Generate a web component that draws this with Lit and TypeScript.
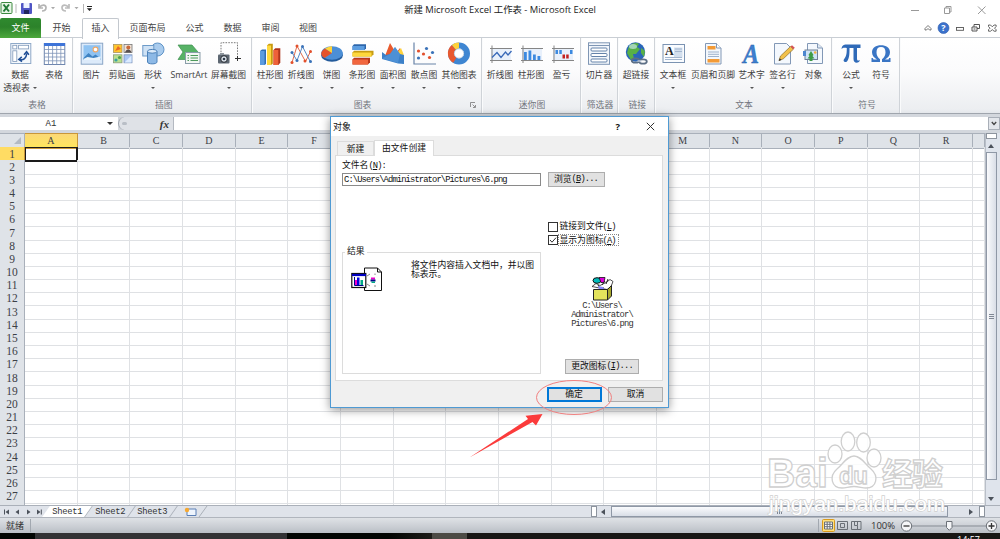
import { LitElement, html, svg, css } from 'lit';
import { customElement, property } from 'lit/decorators.js';
import { classMap } from 'lit/directives/class-map.js';

const ICONS: Record<string, any> = {
  pivot: svg`
    <rect x="2.8" y="1.5" width="20" height="20" fill="#f4f8fc" stroke="#8fa9c8"/>
    <rect x="4.8" y="3.3" width="4" height="3.6" fill="#fff" stroke="#7e97b8" stroke-width=".8"/>
    <rect x="10.6" y="3.3" width="10" height="3.6" fill="#fff" stroke="#7e97b8" stroke-width=".8"/>
    <rect x="4.8" y="8.8" width="4" height="10.6" fill="#fff" stroke="#7e97b8" stroke-width=".8"/>
    <path d="M11.500 17.500c4 1 7-1.500 7.200-6M13.800 14.900l-3 2.500 3.200 2.200M16 12.800l2.600-3 2.300 3" fill="none" stroke="#1f4e96" stroke-width="1.500"/>`,
  table: svg`
    <rect x="2.300" y="1.500" width="20.500" height="21" fill="#fff" stroke="#6f86ae"/>
    <rect x="2" y="1" width="21" height="3" fill="#3e74d8"/>
    <path d="M2 7.500h21M2 11.300h21M2 15h21M2 18.800h21M6.500 4v18.500M10.600 4v18.500M14.700 4v18.500M18.800 4v18.500" stroke="#7d93b8" stroke-width=".8"/>`,
  picture: svg`
    <rect x="1.200" y="1.200" width="21.500" height="21" fill="#dceafa" stroke="#8aa6c6"/>
    <rect x="3.500" y="3.200" width="17" height="14.800" fill="#8fc3f2"/>
    <circle cx="15.500" cy="7.500" r="2.400" fill="#fff" stroke="#f0a868" stroke-width="1.200"/>
    <path d="M3.500 16l5-5 4 3.500 3-2 5 4v1.500h-17z" fill="#3f83c2"/>
    <path d="M3.500 17l4-2 6 1 7-1.500v3.500h-17z" fill="#e8f3fc"/>`,
  clipart: svg`
    <rect x="3.500" y="2.500" width="8.500" height="8" fill="#ffc52e" stroke="#a99361" stroke-width=".8"/>
    <path d="M5 9l3-5 3 3z" fill="#ea6a25"/>
    <rect x="14" y="2.500" width="8" height="8" fill="#efe2d6" stroke="#777" stroke-width=".8"/>
    <circle cx="18.300" cy="5.500" r="2" fill="#c8683a"/><path d="M15 10.500c1-4 5.500-4 6.500 0z" fill="#574f4f"/>
    <rect x="3.500" y="12.800" width="8.500" height="8" fill="#b9e08e" stroke="#8a9c7b" stroke-width=".8"/>
    <circle cx="6" cy="18" r="1.600" fill="#38a1a1"/><circle cx="9.500" cy="15.500" r="1.600" fill="#50a04d"/>
    <rect x="14" y="12.800" width="8" height="8" fill="#a9c6f5" stroke="#7d93b8" stroke-width=".8"/>
    <path d="M14.500 20.500l7-7v7z" fill="#dcebff"/>`,
  shapes: svg`
    <circle cx="16.500" cy="7.500" r="6.500" fill="#a9cbed" stroke="#5e93c7"/>
    <rect x="1.800" y="3.500" width="11" height="10.500" fill="#cfe2f5" stroke="#6d9bc9"/>
    <path d="M6.500 9.500v10.500c0 2.500 9.500 2.500 9.500 0v-10.500z" fill="#8db9e6" stroke="#4d82ba"/>
    <ellipse cx="11.200" cy="9.300" rx="4.700" ry="1.900" fill="#dcebfa" stroke="#4d82ba"/>`,
  smartart: svg`
    <path d="M1 3h14l6 7-6 7.500h-14l5-7.500z" fill="#57b266" stroke="#3f9150" stroke-width=".7"/>
    <rect x="8.500" y="10.500" width="14.500" height="11" fill="#f3f7f3" stroke="#8b9eaa"/>
    <path d="M13.500 13.500h7.500M13.500 16h7.500M13.500 18.500h7.500M10.500 13.500h1.500M10.500 16h1.500M10.500 18.500h1.500" stroke="#4d9a5b" stroke-width="1"/>`,
  screenshot: svg`
    <path d="M4 13v-12.300h16.500v14" fill="none" stroke="#7a7a7a" stroke-dasharray="1.600 1.200"/>
    <path d="M18 16.500h6M20.500 14v5" stroke="#333"/>
    <rect x="1" y="12.500" width="11.500" height="9" rx="1" fill="#5d6772"/>
    <rect x="3" y="11" width="4" height="2" fill="#8c949c"/>
    <circle cx="7" cy="17" r="3.300" fill="#dfe6ee" stroke="#22272d"/><circle cx="7" cy="17" r="1.300" fill="#2e3a48"/>`,
  column: svg`
    <path d="M2 9l2-1.500h4v14.500l-1.500 1h-4.500z" fill="#2f6db5"/><path d="M2 9h4.500v14h-4.500z" fill="#5b9be0"/>
    <path d="M9 3.500l1.800-1.800h4v20l-1.800 1.300h-4z" fill="#c79a10"/><path d="M9 3.500h4v19.500h-4z" fill="#ffd93e"/>
    <path d="M15.500 8l1.800-1.800h5v14.500l-2 2.300h-4.800z" fill="#b0331a"/><path d="M15.500 8h4.800v15h-4.800z" fill="#ee6139"/>`,
  line: svg`
    <path d="M3 20.500l5-16.500 8.500 15.500 5-10" fill="none" stroke="#e06a4c" stroke-width="1"/>
    <path d="M3 10.500l5 8 5.500-14 8 15.500" fill="none" stroke="#5587c5" stroke-width="1"/>
    <g fill="#e2502c"><circle cx="3" cy="20.500" r="1.500"/><circle cx="8" cy="4" r="1.500"/><circle cx="16" cy="19" r="1.500"/><circle cx="21.500" cy="9.500" r="1.500"/></g>
    <g fill="#3a72b8"><circle cx="3" cy="10.500" r="1.500"/><circle cx="8" cy="18.500" r="1.500"/><circle cx="13.500" cy="4.500" r="1.500"/><circle cx="21.500" cy="19.500" r="1.500"/></g>`,
  pie: svg`
    <ellipse cx="12" cy="13" rx="11" ry="6.800" fill="#245b9b"/>
    <ellipse cx="12" cy="11" rx="11" ry="6.800" fill="#4c8fd6"/>
    <path d="M12 11l-7.500 5c-4.500-2.500-4.500-6.500.5-9.500z" fill="#e4532c"/>
    <path d="M12 11l-7-4.500c2-1.300 4.500-2 7-2.300z" fill="#ffd33a"/>`,
  bar: svg`
    <path d="M2.500 4l1.500-1.800h12v4l-1.500 1.800h-12z" fill="#2d66ab"/><path d="M2.500 4h12v4h-12z" fill="#5c9de0"/>
    <path d="M2.500 10.500l1.500-1.800h19.500v3.500l-2 2.300h-19z" fill="#c79c12"/><path d="M2.500 10.500h19v4h-19z" fill="#ffd83d"/>
    <path d="M2.500 17.500l1.500-1.800h16v4.500l-2 2.300h-15.500z" fill="#b8391d"/><path d="M2.500 17.500h15.500v5h-15.500z" fill="#f1663e"/>`,
  area: svg`
    <path d="M4 14l5-13 6 10 4-5 3.500 12-10 2z" fill="#e85a2e"/>
    <path d="M16 11l4-5 2.500 6v6z" fill="#ffd23c"/>
    <path d="M1 10l4 3 4-1 5-7 5 7 4 1v9l-6-.5-16-4.500z" fill="#3c80c8"/>
    <path d="M14 5l5 7-2 9-16-4.500 8-4.500z" fill="#5b9ce0" opacity=".55"/>`,
  scatter: svg`
    <path d="M2 .5v21.500h22" fill="none" stroke="#6883a8" stroke-width="1.200"/>
    <g fill="#e2502c"><circle cx="6.500" cy="9" r="1.600"/><circle cx="11.500" cy="12" r="1.600"/><circle cx="17.500" cy="15.500" r="1.600"/></g>
    <g fill="#3a72b8"><circle cx="14.500" cy="6.500" r="1.600"/><circle cx="20.500" cy="10.500" r="1.600"/><circle cx="6.500" cy="16" r="1.600"/></g>`,
  donut: svg`
    <circle cx="12" cy="11.500" r="8" fill="none" stroke="#3f86d2" stroke-width="6"/>
    <path d="M7.800 18.300a8 8 0 0 1-1-13" fill="none" stroke="#e9582f" stroke-width="6"/>
    <path d="M6.800 5.300a8 8 0 0 1 5.200-1.800" fill="none" stroke="#ffd23a" stroke-width="6"/>
    <circle cx="12" cy="11.500" r="4.700" fill="#fff" stroke="#9bb6d2" stroke-width=".6"/>`,
  sparkline: svg`
    <rect x="3" y="7" width="20" height="11" fill="#e8f0fb"/><path d="M2 6.500h22M2 18.500h22M4 3.500v17.500" stroke="#858585"/>
    <path d="M4 15.500l5-5 4 5 4.500-5.500 2.500 3 3.500-4" fill="none" stroke="#3768b8" stroke-width="1.300"/>`,
  sparkcol: svg`
    <rect x="3" y="7" width="20" height="11" fill="#e8f0fb"/><path d="M2 6.500h22M2 18.500h22M4 3.500v17.500" stroke="#858585"/>
    <path d="M5 10h2.800v8h-2.800zM9.500 8.500h2.800v9.500h-2.800zM14 12.500h2.800v5.500h-2.800zM18.500 14h2.800v4h-2.800z" fill="#3c8ae0"/>`,
  winloss: svg`
    <rect x="3" y="7" width="20" height="11" fill="#e8f0fb"/><path d="M2 6.500h22M2 18.500h22M4 3.500v17.500" stroke="#858585"/>
    <path d="M5.500 8h2.500v4h-2.500zM9.300 8h2.500v4h-2.500zM20 8h2.500v4h-2.500z" fill="#3c8ae0"/>
    <path d="M12.500 12.500h2.500v4h-2.500zM16.200 12.500h2.500v4h-2.500z" fill="#c3201f"/>`,
  slicer: svg`
    <rect x="1.500" y=".8" width="21" height="21.500" fill="#f2f6fb" stroke="#7f96b4"/>
    <path d="M2 3.500h20" stroke="#7f96b4"/>
    <g fill="#fff" stroke="#6583aa"><rect x="4" y="6" width="16" height="3" rx="1"/><rect x="4" y="11.500" width="16" height="3" rx="1"/><rect x="4" y="17" width="16" height="3" rx="1"/></g>`,
  hyperlink: svg`
    <circle cx="11.500" cy="10" r="9.700" fill="#2a66b9"/>
    <path d="M5 4c3-3 8-4 10-2l-2 3 3 2-4 5-3 0 1 5-3 1-4-7z" fill="#58b046"/>
    <path d="M17 6l4 3-1 6-3-4z" fill="#58b046"/><ellipse cx="9" cy="4.500" rx="4" ry="2.500" fill="#d6efff" opacity=".6"/>
    <g fill="none" stroke="#5c6f86" stroke-width="1.800"><ellipse cx="11.500" cy="18.500" rx="3.800" ry="2.200"/><ellipse cx="19" cy="19.500" rx="3.800" ry="2.200"/></g>
    <path d="M13.500 19h4" stroke="#c7d3e2" stroke-width="1.300"/>`,
  textbox: svg`
    <rect x="2" y="2.500" width="21.500" height="18" fill="#fafcff" stroke="#7b93b2"/>
    <rect x="13" y="5.500" width="8.500" height="10" fill="#d3dfee"/><path d="M14 7h7M14 9.500h7M4 15.500h17M4 17.500h17" stroke="#a4b7d0"/>
    <text x="4" y="13" font-family="Liberation Serif, serif" font-size="12" font-weight="bold" fill="#222">A</text>`,
  header: svg`
    <path d="M4.500 1.500h11l4.500 4.500v16h-15.500z" fill="#f3f7fc" stroke="#8298b6"/><path d="M15.500 1.500v4.500h4.500" fill="#fff" stroke="#8298b6"/>
    <rect x="6.500" y="4" width="8" height="3.500" fill="#f39a35"/><rect x="6.500" y="17" width="12" height="3.500" fill="#f39a35"/>
    <path d="M7 10h11M7 12.300h11M7 14.500h11" stroke="#9fb2cb"/>`,
  wordart: svg`
    <text x="3" y="21" font-family="Liberation Serif, serif" font-size="28" font-weight="bold" font-style="italic" fill="#3d7fd0" stroke="#2159a3" stroke-width=".4" textLength="16" lengthAdjust="spacingAndGlyphs">A</text>`,
  signature: svg`
    <path d="M3.500 1.500h12l4 4v16.500h-16z" fill="#f4f8fd" stroke="#8298b6"/>
    <path d="M8 18.500l1.500-4.500 10-9.500 2.800 2.800-10 9.500z" fill="#f2c14b" stroke="#8d6c25" stroke-width=".7"/>
    <path d="M19.500 4.500l1.500-1.300 2.800 2.600-1.500 1.500z" fill="#d65454"/><path d="M7.700 19l1-2.700 1.800 1.700z" fill="#333"/>`,
  object: svg`
    <path d="M5.500 1.500h10l5 4.500v15.500h-15z" fill="#f4f8fd" stroke="#8298b6"/><path d="M15.500 1.500v4.500h5" fill="#dfe8f3" stroke="#8298b6"/>
    <rect x="3" y="8" width="12.500" height="9.500" fill="#cfe3f6" stroke="#6f8096"/><rect x="1" y="9" width="3" height="5" fill="#4c86cf"/>
    <path d="M7.500 19v-2.500h-2l2-2.500-1-1 2.500-4 2.500 4-1 1 2 2.500h-2v2.500z" fill="#3d9b46"/><circle cx="13.200" cy="10.500" r="1.300" fill="#f2ae3b"/>`,
  pi: svg`
    <path d="M2.500 7c.5-3.500 2-4.500 5-4.500h14v3.500h-3.500v10.500c0 2.500 1.500 2.500 3 1.500-.3 3-6.500 4.500-6.500-1v-11h-4c0 6 0 10-2.500 13.500-2.500 1.500-4.500-.5-2.800-2.500 2-2.500 2.600-5 2.600-11-3-.4-4-.2-5.300 1z" fill="#2f6ab8"/>`,
  omega: svg`
    <path d="M2.500 20v-4h1.300l.7 1.500h3.500c-3-2-5-4-5-7.300 0-4.500 4-7 9-7s9 2.500 9 7c0 3.300-2 5.300-5 7.300h3.500l.7-1.500h1.300v4h-8.500v-2.800c2.500-2 3.500-4.200 3.500-7 0-3.500-1.500-5.300-4.500-5.300s-4.500 1.800-4.500 5.300c0 2.800 1 5 3.500 7v2.800z" fill="#3a75c4"/>`,
};

const GROUPS = [
  { name: '表格', width: 73, pad: 2, items: [['pivot', '数据', 36, '透视表'], ['table', '表格', 32]] },
  { name: '插图', width: 179, pad: 3.5, items: [['picture', '图片', 30], ['clipart', '剪贴画', 31], ['shapes', '形状', 31, ' '], ['smartart', 'SmartArt', 41], ['screenshot', '屏幕截图', 38, ' ']] },
  { name: '图表', width: 229.5, pad: 2.5, launcher: true, items: [['column', '柱形图', 31, ' '], ['line', '折线图', 31, ' '], ['pie', '饼图', 30, ' '], ['bar', '条形图', 31, ' '], ['area', '面积图', 31, ' '], ['scatter', '散点图', 31, ' '], ['donut', '其他图表', 39, ' ']] },
  { name: '迷你图', width: 99, pad: 3, items: [['sparkline', '折线图', 31], ['sparkcol', '柱形图', 31], ['winloss', '盈亏', 30]] },
  { name: '筛选器', width: 37, pad: 3, items: [['slicer', '切片器', 31]] },
  { name: '链接', width: 37.5, pad: 3, items: [['hyperlink', '超链接', 31]] },
  { name: '文本', width: 177, pad: 2, items: [['textbox', '文本框', 32, ' '], ['header', '页眉和页脚', 48], ['wordart', '艺术字', 29, ' '], ['signature', '签名行', 33, ' '], ['object', '对象', 29]] },
  { name: '符号', width: 68, pad: 3, items: [['pi', '公式', 32, ' '], ['omega', '符号', 28]] },
] as any[];

@customElement('ribbon-bar')
class RibbonBar extends LitElement {
  static styles = css`
    :host {
      display: flex;
      height: 75px;
      border-top: 1px solid #c9ced4;
      border-bottom: 1px solid #9fa5ad;
      background: linear-gradient(#fff, #fbfbfc 45%, #eceef1 95%, #e4e7eb);
      color: #404040;
      font-size: 8.8px;
    }
    .group {
      box-sizing: border-box;
      display: flex;
      flex-direction: column;
      border-right: 1px solid #cfd3d8;
      box-shadow: 1px 0 #fafbfc;
    }
    .items {
      display: flex;
      height: 61px;
    }
    .item {
      display: flex;
      flex-direction: column;
      align-items: center;
      padding-top: 4px;
      white-space: nowrap;
    }
    .item svg.icon {
      width: 24px;
      height: 24px;
      flex: none;
      overflow: visible;
    }
    .item span {
      line-height: 13px;
      height: 13px;
      margin-top: 2.500px;
    }
    .item .second {
      display: flex;
      align-items: center;
      margin-top: 0;
      gap: 3px;
    }
    .item .second i {
      border: 2px solid transparent;
      border-top-color: #555;
      border-bottom: 0;
    }
    .caption {
      display: flex;
      justify-content: center;
      line-height: 12px;
      color: #72767e;
    }
    .launcher {
      width: 6px;
      height: 6px;
      margin: 3px 4px 0 auto;
    }
    .caption.has-launcher span {
      margin-left: auto;
      padding-left: 0;
    }
  `;

  render() {
    return GROUPS.map(g => html`
      <div class="group" style="width:${g.width}px;padding-left:${g.pad}px">
        <div class="items">
          ${g.items.map(([icon, label, width, second]: any) => html`
            <div class="item" style="width:${width}px">
              <svg class="icon" viewBox="0 0 24 24">${ICONS[icon]}</svg>
              <span>${label}</span>
              ${second ? html`<span class="second">${second.trim()}<i></i></span>` : ''}
            </div>
          `)}
        </div>
        <div class=${classMap({ caption: true, 'has-launcher': !!g.launcher })}>
          <span>${g.name}</span>
          ${g.launcher ? html`<svg class="launcher" viewBox="0 0 6 6"><path d="M.5 5v-4.500h4.500M2.500 2.500l2.500 2.500M5.500 3v2.500h-2.500" fill="none" stroke="#777" stroke-width=".8"/></svg>` : ''}
        </div>
      </div>
    `);
  }
}

@customElement('sheet-grid')
class SheetGrid extends LitElement {
  @property({ type: Number }) rows = 28;

  static styles = css`
    :host {
      display: flex;
      height: 372px;
      overflow: hidden;
      background: #fff;
      font-family: 'Liberation Serif', serif;
      color: #3c4046;
    }
    .sheet {
      flex: 1;
      min-width: 0;
      overflow: hidden;
    }
    .line {
      display: grid;
      grid-template-columns: 25px repeat(18, 52.67px) 1fr;
      height: 13.18px;
      line-height: 14px;
    }
    .line div {
      box-sizing: border-box;
      border-right: 1px solid #dfe1e4;
      border-bottom: 1px solid #dfe1e4;
    }
    .line.head {
      height: 13.6px;
    }
    .line.head div {
      background: #dfe3e8;
      border-color: #a9b0ba;
      border-top: 1px solid #a9b0ba;
      text-align: center;
      font-size: 10px;
      line-height: 14px;
    }
    .line.head div.on {
      background: linear-gradient(#fbd876, #ffe65c);
      border-color: #c8963a;
    }
    .line .num {
      background: #dfe3e8;
      border-color: #a9b0ba;
      text-align: center;
      font-size: 11.5px;
    }
    .line .num.on {
      background: #ffdc63;
      border-color: #c8963a;
    }
    .line .corner svg {
      display: block;
      margin: 3px 3px 0 auto;
    }
    .line .active {
      border: 1.500px solid #1a1a1a;
      border-left-width: 1px;
      border-right-width: 2px;
      border-bottom-width: 2px;
    }
    .scroll {
      width: 11px;
      padding: 0 3.500px 0 0;
      border-left: 1px solid #b9bfc8;
      background: #dfe4ec;
      display: flex;
      flex-direction: column;
      align-items: center;
    }
    .split {
      width: 9px;
      height: 4px;
      border: 1px solid #8d949e;
      background: #fff;
    }
    .up, .down {
      border: 3px solid transparent;
    }
    .up {
      border-top: 0;
      border-bottom: 4px solid #4c525b;
      margin: 5px 0 4px;
    }
    .down {
      border-bottom: 0;
      border-top: 4px solid #4c525b;
      margin-top: 17px;
    }
    .thumb {
      box-sizing: border-box;
      width: 11px;
      height: 328px;
      border: 1px solid #8f98a6;
      background: linear-gradient(90deg, #fafbfd, #d9dee7);
      display: flex;
      align-items: center;
      justify-content: center;
    }
    .grip {
      width: 5px;
      height: 5px;
      background: repeating-linear-gradient(#7f8794 0 1px, transparent 1px 2px);
    }
  `;

  render() {
    const cols = [...'ABCDEFGHIJKLMNOPQR'];
    return html`
      <div class="sheet">
        <div class="line head">
          <div class="corner"><svg width="7" height="7"><path d="M7 0v7h-7z" fill="#b3bac4"/></svg></div>
          ${cols.map((c, i) => html`<div class=${i === 0 ? 'on' : ''}>${c}</div>`)}
          <div></div>
        </div>
        ${Array.from({ length: this.rows }, (_, r) => html`
          <div class="line">
            <div class=${classMap({ num: true, on: r === 0 })}>${r < 27 ? r + 1 : ''}</div>
            ${cols.map((_c, i) => html`<div class=${r === 0 && i === 0 ? 'active' : ''}></div>`)}
            <div></div>
          </div>
        `)}
      </div>
      <div class="scroll">
        <div class="split"></div>
        <div class="up"></div>
        <div class="thumb"><div class="grip"></div></div>
        <div class="down"></div>
      </div>
    `;
  }
}

@customElement('object-dialog')
class ObjectDialog extends LitElement {
  static styles = css`
    :host {
      box-sizing: border-box;
      display: block;
      width: 339px;
      height: 292px;
      border: 1px solid #4f9ad3;
      background: #f0f0f0;
      box-shadow: 0 2px 9px rgba(0, 0, 0, .42);
      color: #111;
      font-size: 8.8px;
      line-height: 9px;
    }
    .mono {
      font-family: 'Liberation Mono', monospace;
      letter-spacing: -.88px;
    }
    .title {
      display: flex;
      align-items: center;
      height: 18.500px;
      padding: 0 13px 0 2px;
      background: #fff;
      font-size: 9px;
    }
    .title b {
      margin-left: auto;
      margin-right: 26px;
      font-size: 9.500px;
    }
    .tabs {
      display: flex;
      align-items: flex-end;
      height: 19px;
      padding-left: 6px;
    }
    .tab {
      box-sizing: border-box;
      width: 37px;
      height: 14px;
      padding-top: 3px;
      border: 1px solid #dcdcdc;
      border-bottom: 0;
      text-align: center;
    }
    .tab.on {
      width: 60px;
      height: 16px;
      background: #fff;
      margin-bottom: -1px;
      z-index: 1;
    }
    .panel {
      box-sizing: border-box;
      display: grid;
      grid-template-columns: 199px 115px;
      column-gap: 6.500px;
      width: 328px;
      height: 226px;
      margin-left: 4px;
      padding: 5px 0 0 6px;
      border: 1px solid #dcdcdc;
      background: #fff;
    }
    .input {
      box-sizing: border-box;
      height: 13px;
      margin-top: 2.500px;
      padding: 1.500px 1px;
      border: 1px solid #8a8a8a;
    }
    .group {
      position: relative;
      box-sizing: border-box;
      height: 122px;
      margin-top: 66px;
      border: 1px solid #dcdcdc;
      display: flex;
      gap: 29px;
      padding: 14px 4px 0 8px;
    }
    .legend {
      position: absolute;
      top: -6px;
      left: 2px;
      padding: 0 2px;
      background: #fff;
    }
    .result {
      width: 125px;
      margin-top: -6px;
    }
    .btn {
      box-sizing: border-box;
      display: flex;
      align-items: center;
      justify-content: center;
      height: 15px;
      border: 1px solid #adadad;
      background: #e1e1e1;
    }
    .browse {
      width: 57px;
      margin-top: 11px;
    }
    .checks {
      display: flex;
      flex-direction: column;
      gap: 3px;
      margin-top: 35px;
    }
    .check {
      display: flex;
      align-items: center;
      gap: 1px;
      height: 10px;
    }
    .check svg {
      width: 10px;
      height: 10px;
    }
    .focus {
      outline: 1px dotted #888;
      outline-offset: 0;
      height: 10px;
      padding: 0 1px;
      line-height: 10px;
    }
    .check span:not(.focus) {
      padding: 0 1px;
    }
    .check .mono {
      margin-left: -2px;
    }
    .preview {
      display: flex;
      flex-direction: column;
      align-items: center;
      width: 109px;
      margin-top: 31px;
    }
    .preview .mono {
      margin-top: 1px;
      text-align: center;
      color: #333;
    }
    .change {
      width: 74px;
      margin: 30px 0 0 17.500px;
    }
    .actions {
      display: flex;
      justify-content: flex-end;
      gap: 6.500px;
      padding: 6.500px 5px 0 0;
    }
    .actions .btn {
      width: 55px;
    }
    .actions .ok {
      border: 2px solid #0078d7;
    }
  `;

  render() {
    return html`
      <div class="title">
        <span>对象</span><b>?</b>
        <svg width="9" height="9"><path d="M.8.800l7.400 7.400M8.200.800l-7.400 7.400" stroke="#333"/></svg>
      </div>
      <div class="tabs"><div class="tab">新建</div><div class="tab on">由文件创建</div></div>
      <div class="panel">
        <div>
          <div>文件名<span class="mono">(<u>N</u>):</span></div>
          <div class="input mono">C:\\Users\\Administrator\\Pictures\\6.png</div>
          <div class="group">
            <div class="legend">结果</div>
            <svg width="31" height="25" viewBox="0 0 31 25">
              <path d="M13.500 1h13l4 4v18.500h-17z" fill="#fff" stroke="#111"/><path d="M26.500 1v4h4" fill="none" stroke="#111"/>
              <path d="M16 9l3-2M16 17l3 2M24 6.500v1.500M24 18v2" stroke="#888"/>
              <path d="M20 10.500h4v2h-4z" fill="#e0c"/><path d="M19.500 12.500h5v2h-5z" fill="#008"/><path d="M20.500 14.500h3.500v1.500h-3.500z" fill="#0a8"/>
              <rect x=".8" y="6.500" width="14" height="14" fill="#fff" stroke="#111" stroke-width="1.200"/><path d="M1 8h14" stroke="#0000c0" stroke-width="2.200"/>
              <path d="M3.500 13h2.500v5h-2.500z" fill="#e0c"/><path d="M6 10.500h2.500v7.500h-2.500z" fill="#00d"/><path d="M9.500 13h2.500v5h-2.500z" fill="#0a8"/><path d="M3.500 10v8.500h9" fill="none" stroke="#008"/>
            </svg>
            <div class="result">将文件内容插入文档中，并以图标表示。</div>
          </div>
        </div>
        <div>
          <div class="btn browse">浏览<span class="mono">(<u>B</u>)...</span></div>
          <div class="checks">
            <div class="check">
              <svg viewBox="0 0 10 10"><rect x=".5" y=".5" width="9" height="9" fill="#fff" stroke="#333"/></svg>
              <span>链接到文件<span class="mono">(<u>L</u>)</span></span>
            </div>
            <div class="check">
              <svg viewBox="0 0 10 10"><rect x=".5" y=".5" width="9" height="9" fill="#fff" stroke="#333"/><path d="M2 5l2 2.200 4-4.500" fill="none" stroke="#333"/></svg>
              <span class="focus">显示为图标<span class="mono">(<u>A</u>)</span></span>
            </div>
          </div>
          <div class="preview">
            <svg width="23" height="25" viewBox="0 0 23 25">
              <path d="M1 10.500l4-3 4 2 6-3 4-3 3 2-2 5-4 3z" fill="#fff" stroke="#222" stroke-width=".8"/>
              <ellipse cx="6" cy="4.500" rx="4" ry="2.800" fill="#0bb" stroke="#111"/><path d="M8 1.500h6l-1 5h-3z" fill="#d0d" stroke="#111" stroke-width=".8"/>
              <path d="M11 9l3-4M15 8l2-5M7 9l2 3h4" stroke="#222" fill="none"/><path d="M7 10l5 1 1 2h-5z" fill="#88f"/>
              <path d="M2.500 13.500h14v10.500h-14z" fill="#e3e35c" stroke="#222"/><path d="M16.500 13.500l4-4v10.500l-4 4z" fill="#a8a82e" stroke="#222"/>
            </svg>
            <div class="mono">C:\\Users\\<br>Administrator\\<br>Pictures\\6.png</div>
          </div>
          <div class="btn change">更改图标<span class="mono">(<u>I</u>)...</span></div>
        </div>
      </div>
      <div class="actions"><div class="btn ok">确定</div><div class="btn">取消</div></div>
    `;
  }
}

@customElement('app-root')
class AppRoot extends LitElement {
  static styles = css`
    :host {
      position: relative;
      display: flex;
      flex-direction: column;
      width: 1000px;
      height: 539px;
      overflow: hidden;
      background: #fff;
      font-family: 'Open Sans', 'Noto Sans', 'Noto Sans CJK SC', sans-serif;
      font-size: 9px;
      color: #333;
    }
    .titlebar {
      display: grid;
      grid-template-columns: 380px 1fr 380px;
      align-items: center;
      height: 18px;
    }
    .titlebar .name {
      text-align: center;
      font-size: 9.400px;
      color: #222;
      white-space: nowrap;
    }
    .winbtns {
      justify-self: end;
    }
    .tabs {
      display: flex;
      height: 20px;
      margin-bottom: -1px;
      z-index: 1;
      line-height: 20px;
    }
    .tabs div {
      box-sizing: border-box;
      text-align: center;
      color: #444;
    }
    .tabs .file {
      width: 41px;
      border-radius: 2px 2px 0 0;
      background: linear-gradient(#2f8a2f, #2c822a 45%, #4da83c);
      color: #fff;
    }
    .tabs .on {
      height: 21px;
      border: 1px solid #c3c8ce;
      border-bottom: 0;
      border-radius: 2px 2px 0 0;
      background: #fff;
      line-height: 18px;
    }
    .tabs svg {
      margin-left: auto;
    }
    .formula {
      display: flex;
      align-items: center;
      height: 19px;
      background: #d3d7dd;
    }
    .formula > div {
      height: 13.500px;
      background: #fff;
    }
    .formula .cellname {
      display: flex;
      align-items: center;
      width: 118px;
      font-family: 'Liberation Mono', monospace;
      font-size: 9px;
    }
    .cellname span {
      width: 102px;
      text-align: center;
      margin-right: 5px;
    }
    .cellname i {
      border: 3px solid transparent;
      border-top-color: #333;
      border-bottom: 0;
    }
    .formula .fx {
      display: flex;
      align-items: center;
      justify-content: space-between;
      box-sizing: border-box;
      width: 56px;
      padding-right: 4px;
      background: #dfe2e7;
      border-right: 1px solid #b4b9c1;
      border-left: 1px solid #9da3ac;
      border-radius: 7px 0 0 7px;
      font: italic bold 11px 'Liberation Serif', serif;
    }
    .fx i {
      width: 5px;
      height: 3px;
      margin-left: 3px;
      border-radius: 2px;
      background: #b9bec6;
    }
    .formula .entry {
      flex: 1;
    }
    .formula .expand {
      box-sizing: border-box;
      width: 12px;
      border: 1px solid #a9afb8;
      background: #e3e6eb;
      display: flex;
      align-items: center;
      justify-content: center;
    }
    .sheets {
      display: flex;
      align-items: center;
      height: 12px;
      background: #dfe3ea;
      border-top: 1px solid #aab0b9;
      box-sizing: border-box;
    }
    .nav {
      display: flex;
      width: 46px;
      justify-content: center;
    }
    .sheet {
      box-sizing: border-box;
      width: 42.500px;
      height: 11px;
      padding-left: 7px;
      font: 8.800px/13px 'Liberation Mono', monospace;
      letter-spacing: -.3px;
      border-right: 1px solid #aab0b9;
      transform: skewX(-35deg);
    }
    .sheet span {
      display: block;
      transform: skewX(35deg);
    }
    .sheet.on {
      background: #fff;
    }
    .sheets .new {
      margin-left: 4px;
    }
    .hscroll {
      display: flex;
      align-items: center;
      width: 394px;
      margin: 0 15px 0 auto;
    }
    .handle {
      box-sizing: border-box;
      width: 6px;
      height: 11px;
      border: 1px solid #8d949e;
      background: #fff;
    }
    .left, .right {
      border: 3px solid transparent;
    }
    .left {
      border-left: 0;
      border-right: 4px solid #4c525b;
      margin: 0 6px 0 4px;
    }
    .right {
      border-right: 0;
      border-left: 4px solid #4c525b;
      margin: 0 6px 0 auto;
    }
    .thumb {
      box-sizing: border-box;
      width: 337px;
      height: 11px;
      border: 1px solid #8f98a6;
      background: linear-gradient(#fafbfd, #d9dee7);
      display: flex;
      align-items: center;
      justify-content: center;
    }
    .grip {
      width: 6px;
      height: 5px;
      background: repeating-linear-gradient(90deg, #7f8794 0 1px, transparent 1px 2px);
    }
    .status {
      display: flex;
      align-items: center;
      height: 16px;
      background: linear-gradient(#dfe2e6, #c9cdd3 60%, #b9bec5);
      border-top: 1px solid #b0b5bd;
      box-sizing: border-box;
    }
    .ready {
      width: 24px;
      padding-left: 6px;
      border-right: 1px solid #a2a8b0;
    }
    .views {
      display: flex;
      align-items: center;
      margin-left: auto;
      border-left: 1px solid #a2a8b0;
      padding-left: 3px;
    }
    .zoom {
      width: 23px;
      margin: 0 6px 0 7px;
      font-size: 9.500px;
      white-space: nowrap;
    }
    .taskbar {
      display: flex;
      height: 6px;
      overflow: hidden;
      background: #171614;
      color: #fff;
    }
    .taskbar .start { width: 35px; background: #020502; }
    .taskbar .search { width: 252px; background: #323234; }
    .taskbar .apps { width: 145px; background: linear-gradient(90deg, #020502 70%, #1c1c18); }
    .taskbar .current { width: 35px; background: #4c4b45; }
    .taskbar .clock { margin-left: auto; padding-right: 20px; line-height: 13px; font-size: 9px; }
    object-dialog {
      position: absolute;
      left: 330px;
      top: 116px;
      z-index: 2;
    }
    .overlay {
      position: absolute;
      left: 0;
      top: 0;
      z-index: 3;
    }
  `;

  render() {
    const tabs = [['开始', 41], ['插入', 37], ['页面布局', 57], ['公式', 37], ['数据', 39], ['审阅', 37], ['视图', 38]] as const;
    return html`
      <div class="titlebar">
        <svg width="100" height="18">
          <rect x="1" y="2.500" width="11" height="11" rx="1" fill="#e8f5e6" stroke="#3d8a41"/><path d="M3.500 4.500l5.500 7M9 4.500l-5.500 7" stroke="#217a35" stroke-width="2"/>
          <path d="M16 4v9M83.500 4v9" stroke="#b5b5b5"/>
          <rect x="21" y="3" width="11" height="11" rx="1" fill="#4f55c4"/><path d="M23.500 3h6v5h-6z" fill="#eef3ff"/><path d="M24 10h5v4h-5z" fill="#20265e"/>
          <path d="M39 4v4h4M39.500 7.500c2-3.500 6.500-3 6.500 0 0 2.500-2 3.500-4 3.500" fill="none" stroke="#b4b4b4" stroke-width="1.700"/>
          <path d="M69 4v4h-4M68.500 7.500c-2-3.500-6.500-3-6.500 0 0 2.500 2 3.500 4 3.500" fill="none" stroke="#bcbcbc" stroke-width="1.700"/>
          <path d="M51 7h4l-2 2.200zM74.500 7h4l-2 2.200z" fill="#aaa"/>
          <path d="M87 6.500h5" stroke="#222"/><path d="M86.800 8.300h5.400l-2.700 2.700z" fill="#222"/>
        </svg>
        <div class="name">新建 Microsoft Excel 工作表 - Microsoft Excel</div>
        <svg class="winbtns" width="100" height="18" fill="none" stroke="#999">
          <path d="M11 10.500h8"/><path d="M44.500 8h5v5.500h-5zM46 8v-1.500h5v5.500h-1.500"/><path d="M78 6.500l7.500 7.500M85.500 6.500l-7.500 7.500"/>
        </svg>
      </div>
      <div class="tabs">
        <div class="file">文件</div>
        ${tabs.map(([name, width]) => html`<div class=${name === '插入' ? 'on' : ''} style="width:${width}px">${name}</div>`)}
        <svg width="80" height="20" fill="none" stroke="#555">
          <path d="M5 10.500l3-3 3 3v1.500h-1.500l-1.500-1.500-1.500 1.500h-1.500z" stroke-width=".8"/>
          <circle cx="23.500" cy="10" r="5.500" fill="#3b72cc" stroke="#2b5bad" stroke-width=".6"/>
          <text x="21.300" y="13.300" font-size="9" font-weight="bold" fill="#fff" stroke="none">?</text>
          <rect x="36.500" y="9.500" width="7" height="2.800" stroke-width=".9"/>
          <path d="M52 9h5v4h-5zM54 9v-2.500h5.500v4h-2.500M53.500 11h2" stroke-width="1"/>
          <path d="M68.500 7h2l1.800 1.800 1.800-1.800h2v1.500l-1.500 1.700 1.500 1.500v1.500h-2l-1.800-1.500-1.800 1.500h-2v-1.500l1.500-1.500-1.500-1.700z" stroke-width=".9"/>
        </svg>
      </div>
      <ribbon-bar></ribbon-bar>
      <div class="formula">
        <div class="cellname"><span>A1</span><i></i></div>
        <div class="fx"><i></i>fx</div>
        <div class="entry"></div>
        <div class="expand"><svg width="6" height="5"><path d="M.8 1l2.200 2.500 2.200-2.500" fill="none" stroke="#444" stroke-width="1.300"/></svg></div>
      </div>
      <sheet-grid></sheet-grid>
      <div class="sheets">
        <div class="nav">
          <svg width="40" height="8" fill="#4c525b"><path d="M1 1.500h1v5h-1zM6 1.500v5l-3.500-2.500zM16 1.500v5l-3.500-2.500zM24 1.500v5l3.500-2.500zM34 1.500v5l3.500-2.500zM37.800 1.500h1v5h-1z"/></svg>
        </div>
        <div class="sheet on"><span>Sheet1</span></div>
        <div class="sheet"><span>Sheet2</span></div>
        <div class="sheet"><span>Sheet3</span></div>
        <svg class="new" width="30" height="11"><path d="M9 3h9v6.500h-9z" fill="#eef4fc" stroke="#5b7fb5"/><circle cx="9" cy="4" r="2.200" fill="#f5a831"/><path d="M21 11l8-11" stroke="#aab0b9"/></svg>
        <div class="hscroll">
          <div class="handle"></div>
          <div class="left"></div>
          <div class="thumb"><div class="grip"></div></div>
          <div class="right"></div>
          <div class="handle"></div>
        </div>
      </div>
      <div class="status">
        <div class="ready">就绪</div>
        <div class="views">
          <svg width="42" height="13" fill="none" stroke="#6b7077">
            <rect x=".5" y=".5" width="12" height="12" rx="1" fill="#ffe07a" stroke="#d99a1c"/>
            <path d="M2.500 3h8v7h-8zM2.500 5.300h8M2.500 7.700h8M5.200 3v7M7.900 3v7" fill="#fff"/>
            <path d="M15.500 2.500h10v8h-10zM18.500 4.500h4v4h-4z"/><path d="M29.500 2.500h9.500v8h-9.500zM32.500 2.500v4h3v-4M35.500 6.500v4"/>
          </svg>
        </div>
        <div class="zoom">100%</div>
        <svg width="100" height="14" fill="none" stroke="#6b7077">
          <path d="M12 7h75" stroke="#858b93"/><circle cx="6.500" cy="7" r="5.200" fill="#f5f6f8"/><path d="M3.500 7h6" stroke="#333" stroke-width="1.300"/>
          <circle cx="91.500" cy="7" r="5.200" fill="#f5f6f8"/><path d="M88.500 7h6M91.500 4v6" stroke="#333" stroke-width="1.300"/>
          <path d="M46.500 2.500h5.500v6l-2.700 2.800-2.800-2.800z" fill="#f5f6f8"/>
        </svg>
      </div>
      <div class="taskbar">
        <div class="start"></div><div class="search"></div><div class="apps"></div><div class="current"></div>
        <div class="clock">14:57</div>
      </div>
      <object-dialog></object-dialog>
      <svg class="overlay" width="1000" height="539">
        <ellipse cx="574" cy="397.500" rx="37.500" ry="17" fill="none" stroke="#f08080"/>
        <path d="M469.500 457.500l58.500-38.500-2.500-3.300 17-1.700-6.500 11.500-3.500-3.500z" fill="#fb3b3b"/>
        <g fill="#fff" fill-opacity=".85" stroke="#cfcfcf" stroke-width="1.300">
          <ellipse cx="835" cy="454" rx="7" ry="9"/><ellipse cx="848" cy="441.500" rx="6.800" ry="9.500"/>
          <ellipse cx="863.500" cy="442.500" rx="6.800" ry="9.500"/><ellipse cx="874" cy="458" rx="7" ry="9"/>
          <path d="M854 456c7 0 11 8 17 13 8 7 6 19-5 19-4 0-7-1.500-12-1.500s-8 1.500-12 1.500c-11 0-13-12-5-19 6-5 10-13 17-13z"/>
          <g font-family="Liberation Sans, sans-serif" font-weight="bold">
            <text x="767" y="487" font-size="40" textLength="61" lengthAdjust="spacingAndGlyphs">Bai</text>
            <text x="839" y="484" font-size="24" textLength="29">du</text>
            <text x="882" y="485" font-size="31" font-family="Noto Sans CJK SC, sans-serif" textLength="61">经验</text>
          </g>
        </g>
        <text x="769" y="511" font-family="Liberation Sans, sans-serif" font-size="20" fill="#fff" stroke="#cfcfcf" stroke-width="1.300" paint-order="stroke" textLength="176" lengthAdjust="spacingAndGlyphs">jingyan.baidu.com</text>
      </svg>
    `;
  }
}
